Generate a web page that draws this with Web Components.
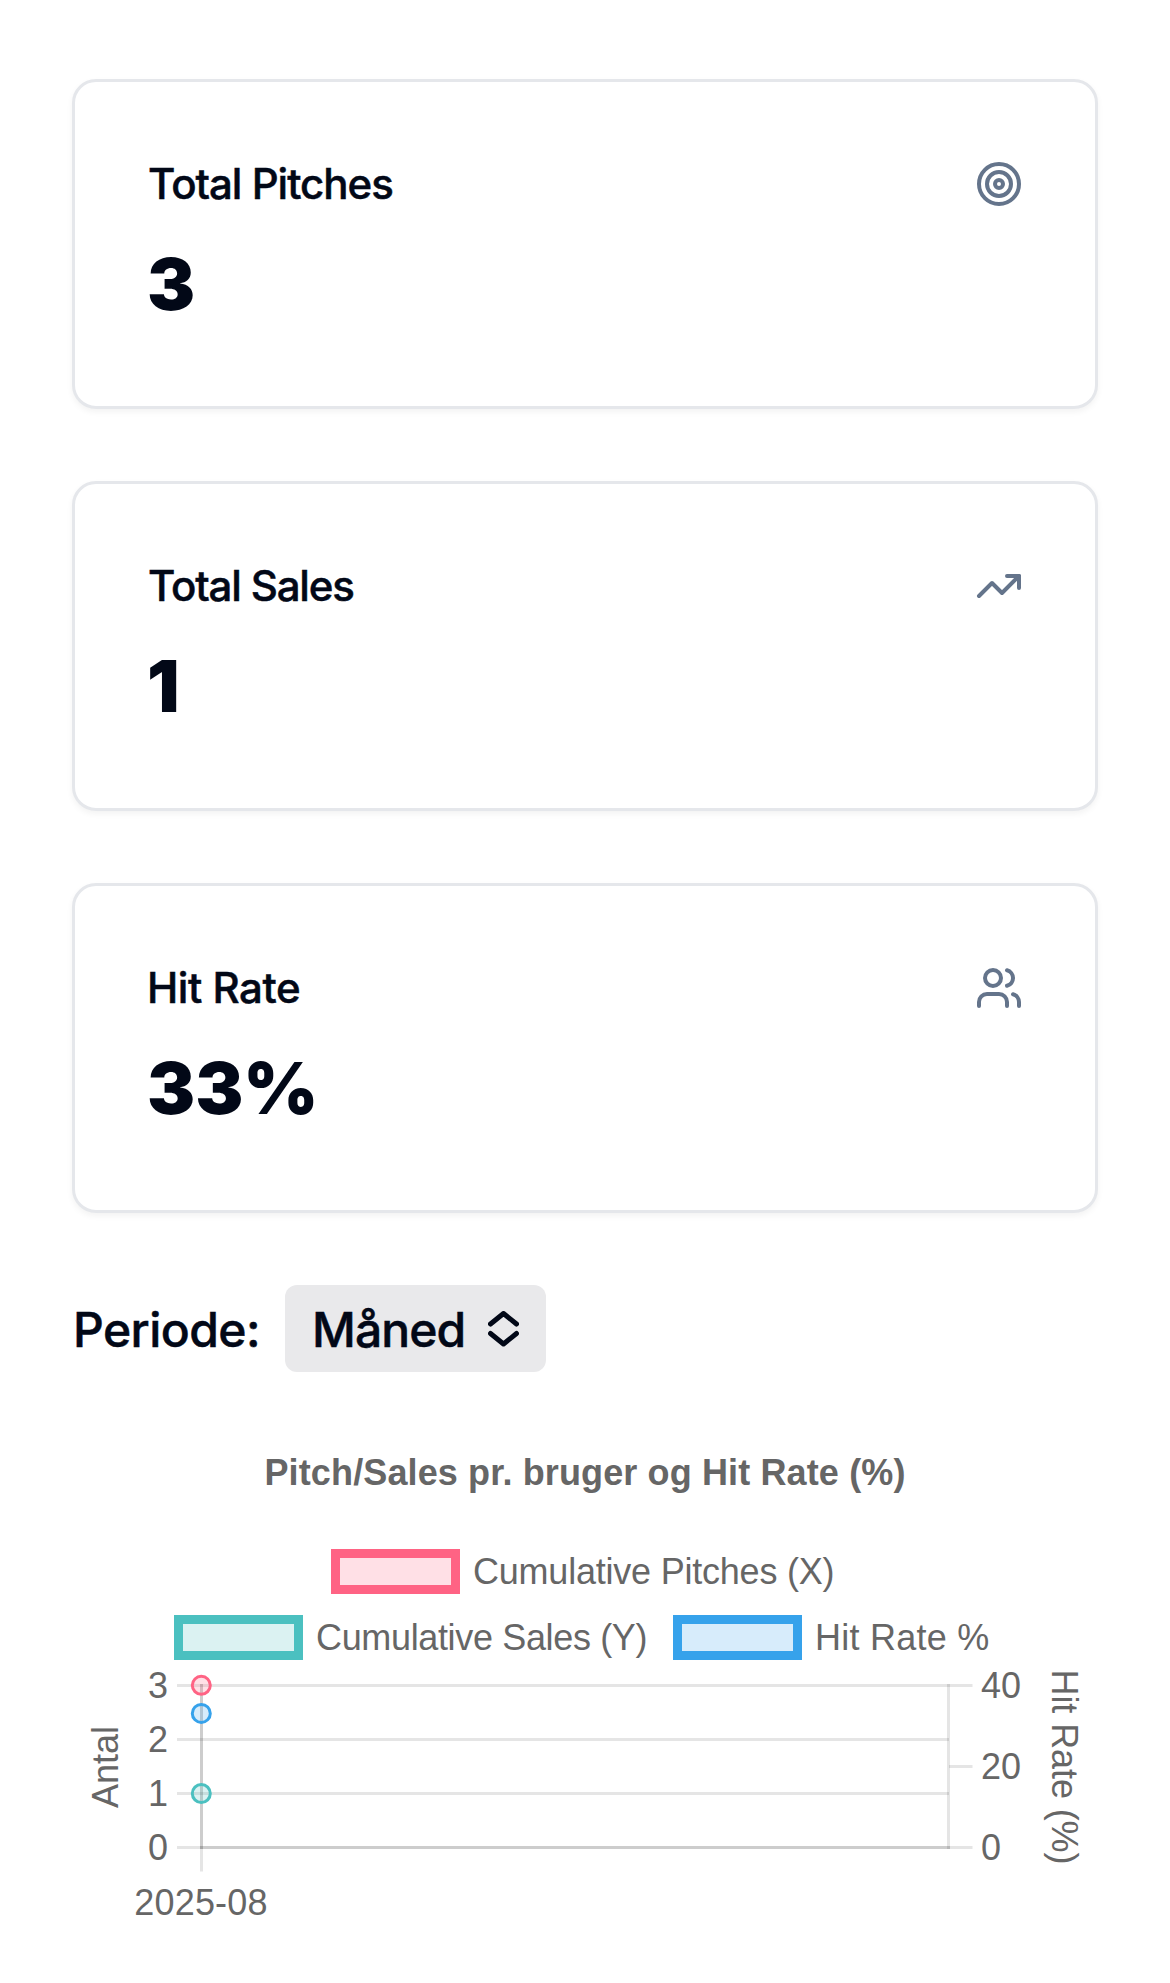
<!DOCTYPE html>
<html lang="da">
<head>
<meta charset="utf-8">
<title>Pitch dashboard</title>
<style>
  body { margin: 0; background: #fff; }
</style>
</head>
<body>
<pitch-dashboard></pitch-dashboard>
<script>
const define = (name, html) => {
  const template = document.createElement('template');
  template.innerHTML = html;
  customElements.define(name, class extends HTMLElement {
    constructor() {
      super();
      this.attachShadow({ mode: 'open' }).append(template.content.cloneNode(true));
    }
  });
};

define('stat-card', `
  <style>
    :host { display: block; box-sizing: border-box; height: 330px; padding: 69px 72px; border: 3px solid #e5e7eb;
      border-radius: 24px; background: #fff; box-shadow: 0 3px 6px rgba(0,0,0,.05); }
    header { display: flex; justify-content: space-between; align-items: center; height: 66px; }
    .label { padding-left: var(--label-inset, 1px); font-size: 42px; font-weight: 500; -webkit-text-stroke: .5px; letter-spacing: var(--label-spacing, -1px); line-height: 60px; }
    .value { margin-top: 19px; font-size: 72px; font-weight: 900; line-height: 96px; }
    ::slotted(svg) { width: 48px; height: 48px; fill: none; stroke: #64748b; stroke-width: 2; stroke-linecap: round; stroke-linejoin: round; }
  </style>
  <header><span class="label"><slot name="label"></slot></span><slot name="icon"></slot></header>
  <div class="value"><slot></slot></div>`);

define('period-picker', `
  <style>
    :host { display: flex; align-items: center; height: 87px; font-size: 48px; font-weight: 500; -webkit-text-stroke: .5px; }
    .label { width: 213px; letter-spacing: -.55px; padding: 2px 0 0 1px; box-sizing: border-box; }
    button { display: flex; align-items: center; justify-content: space-between; width: 261px; height: 87px;
      padding: 2px 27px 0 27px; border: 0; border-radius: 12px; background: #e9e9eb; color: inherit; font: inherit; letter-spacing: -.9px; }
    svg { width: 31px; height: 36px; margin-top: -2px; fill: none; stroke: #020817; stroke-width: 5; stroke-linecap: round; stroke-linejoin: round; }
  </style>
  <span class="label">Periode:</span>
  <button type="button"><span><slot></slot></span>
    <svg viewBox="0 0 31 36"><path d="M2.5 13 15.5 2.5 28.5 13M2.5 22.5 15.5 33 28.5 22.5"/></svg>
  </button>`);

define('legend-item', `
  <style>
    :host { display: flex; align-items: center; gap: 13px; height: 45px; font-size: 36px; line-height: 45px; white-space: nowrap; }
    i { box-sizing: border-box; flex: none; width: 129px; height: 45px; border: 9px solid var(--line); background: var(--fill); }
  </style>
  <i></i><span><slot></slot></span>`);

define('pitch-chart', `
  <style>
    :host { display: block; color: #666; font-family: "Liberation Sans", Arial, sans-serif; }
    h2 { margin: 0; padding-top: 1px; font-size: 36px; line-height: 43px; font-weight: 700; text-align: center; letter-spacing: .13px; }
    .row { display: flex; }
    .first { margin: 55px 0 21px; padding-left: 259px; letter-spacing: -.22px; }
    .second { padding-left: 102px; }
    .second :first-child { width: 499px; letter-spacing: -.35px; }
    .second :last-child { letter-spacing: .25px; }
    .plot { display: block; width: 1026px; height: 270px; overflow: visible; font-size: 36px; fill: #666; }
    .grid { fill: none; stroke: rgba(0,0,0,.1); stroke-width: 3; }
  </style>
  <h2>Pitch/Sales pr. bruger og Hit Rate (%)</h2>
  <div class="row first"><legend-item style="--line:#ff6384;--fill:#ffe0e6">Cumulative Pitches (X)</legend-item></div>
  <div class="row second">
    <legend-item style="--line:#4bc0c0;--fill:#dbf2f2">Cumulative Sales (Y)</legend-item>
    <legend-item style="--line:#36a2eb;--fill:#d7ecfb">Hit Rate %</legend-item>
  </div>
  <svg class="plot" viewBox="72 1660 1026 270">
    <g class="grid">
      <path d="M177 1685.5H949"/><path d="M177 1739.5H949"/><path d="M177 1793.5H949"/><path d="M177 1847.5H949"/>
      <path d="M201.5 1684V1871.5"/><path d="M201.5 1684V1849"/><path d="M200 1847.5H950"/>
      <path d="M948.5 1684V1849"/><path d="M949 1685.5H972.5"/><path d="M949 1766.5H972.5"/><path d="M949 1847.5H972.5"/>
    </g>
    <g stroke-width="3">
      <circle cx="201.3" cy="1713.4" r="9" fill="rgba(54,162,235,.2)" stroke="#36a2eb"/>
      <circle cx="201.3" cy="1793.5" r="9" fill="rgba(75,192,192,.2)" stroke="#4bc0c0"/>
      <circle cx="201.3" cy="1685.3" r="9" fill="rgba(255,99,132,.2)" stroke="#ff6384"/>
    </g>
    <g text-anchor="end">
      <text x="168" y="1698">3</text><text x="168" y="1752">2</text><text x="168" y="1806">1</text><text x="168" y="1860">0</text>
    </g>
    <text x="981" y="1698">40</text><text x="981" y="1779">20</text><text x="981" y="1860">0</text>
    <text x="201" y="1915" text-anchor="middle" letter-spacing=".2">2025-08</text>
    <text transform="translate(118 1767) rotate(-90)" text-anchor="middle">Antal</text>
    <text transform="translate(1052 1767) rotate(90)" text-anchor="middle" letter-spacing="-.1">Hit Rate (%)</text>
  </svg>`);

define('pitch-dashboard', `
  <style>
    :host { display: flex; flex-direction: column; gap: 72px; box-sizing: border-box; min-height: 1983px; padding: 79px 72px 0;
      color: #020817; background: #fff; font-family: Inter, "Liberation Sans", sans-serif; }
    pitch-chart { margin-top: 6px; }
  </style>
  <stat-card><span slot="label">Total Pitches</span>
    <svg slot="icon" viewBox="0 0 24 24"><circle cx="12" cy="12" r="10"/><circle cx="12" cy="12" r="6"/><circle cx="12" cy="12" r="2"/></svg>3</stat-card>
  <stat-card style="--label-spacing:-1.16px"><span slot="label">Total Sales</span>
    <svg slot="icon" viewBox="0 0 24 24"><path d="M22 7 13.5 15.5 8.5 10.5 2 17"/><path d="M16 7h6v6"/></svg>1</stat-card>
  <stat-card style="--label-spacing:-.45px;--label-inset:0px"><span slot="label">Hit Rate</span>
    <svg slot="icon" viewBox="0 0 24 24"><path d="M16 21v-2a4 4 0 0 0-4-4H6a4 4 0 0 0-4 4v2"/><circle cx="9" cy="7" r="4"/><path d="M22 21v-2a4 4 0 0 0-3-3.87M16 3.13a4 4 0 0 1 0 7.75"/></svg>33%</stat-card>
  <period-picker>Måned</period-picker>
  <pitch-chart></pitch-chart>`);
</script>
</body>
</html>
